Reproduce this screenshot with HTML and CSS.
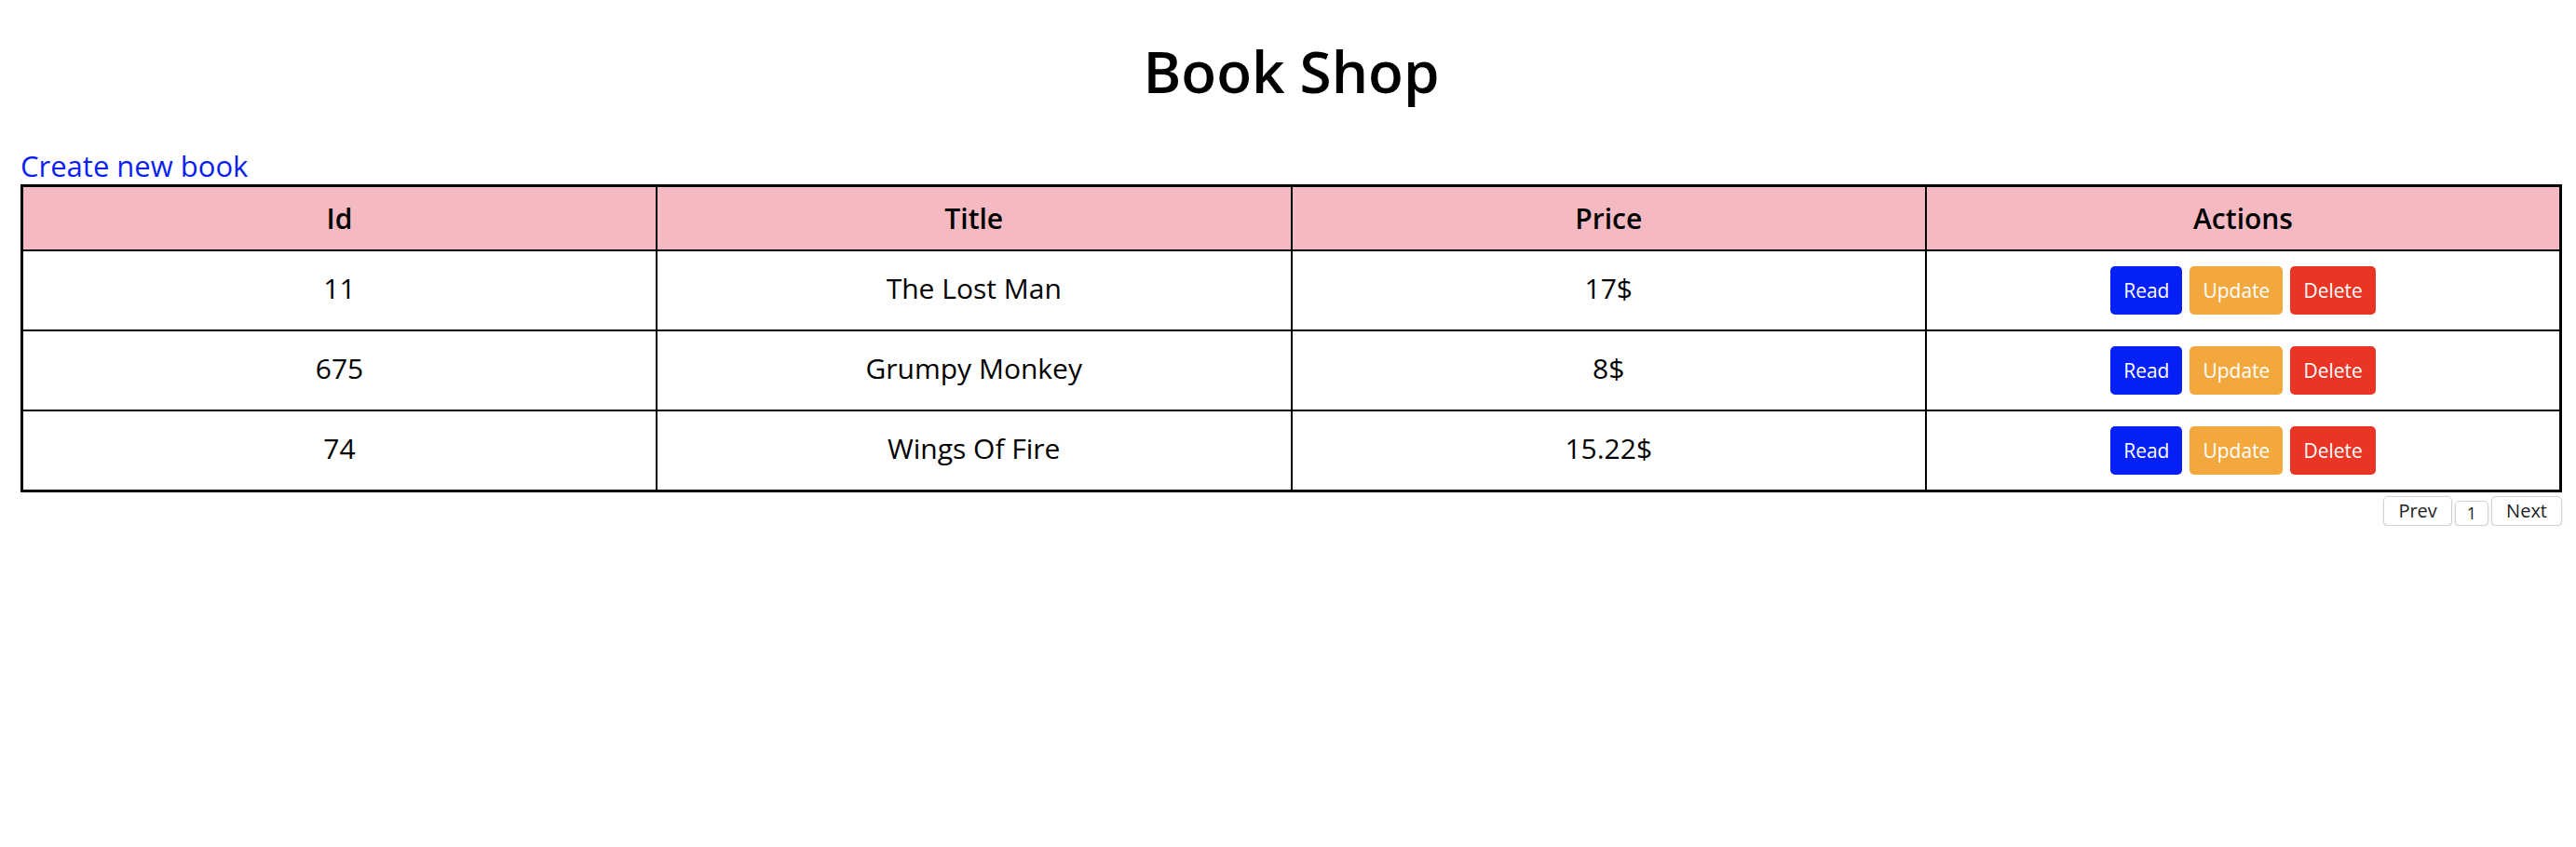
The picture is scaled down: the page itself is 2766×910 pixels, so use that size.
FILE: index.html
```html
<!DOCTYPE html>
<html lang="en">
<head>
<meta charset="utf-8">
<title>Book Shop</title>
<link rel="stylesheet" href="styles.css">
</head>
<body>
<div class="page">
  <h1 class="title">Book Shop</h1>
  <div class="create-row"><a class="create-link" href="#">Create new book</a></div>
  <table class="books">
    <thead>
      <tr><th>Id</th><th>Title</th><th>Price</th><th>Actions</th></tr>
    </thead>
    <tbody>
      <tr>
        <td>11</td><td>The Lost Man</td><td>17$</td>
        <td class="cell-actions"><div class="actions"><button class="btn btn-read">Read</button><button class="btn btn-update">Update</button><button class="btn btn-delete">Delete</button></div></td>
      </tr>
      <tr>
        <td>675</td><td>Grumpy Monkey</td><td>8$</td>
        <td class="cell-actions"><div class="actions"><button class="btn btn-read">Read</button><button class="btn btn-update">Update</button><button class="btn btn-delete">Delete</button></div></td>
      </tr>
      <tr>
        <td>74</td><td>Wings Of Fire</td><td>15.22$</td>
        <td class="cell-actions"><div class="actions"><button class="btn btn-read">Read</button><button class="btn btn-update">Update</button><button class="btn btn-delete">Delete</button></div></td>
      </tr>
    </tbody>
  </table>
  <div class="pagination">
    <button class="pg-btn">Prev</button>
    <button class="pg-btn pg-current">1</button>
    <button class="pg-btn">Next</button>
  </div>
</div>
</body>
</html>
```
FILE: styles.css
```css
html, body {
  margin: 0;
  padding: 0;
  background: #ffffff;
}

body {
  font-family: "Open Sans", "Noto Sans", sans-serif;
  color: #000000;
}

.page {
  padding: 0 15px 0 22px;
}

.title {
  margin: 0;
  padding-top: 44px;
  font-size: 62px;
  line-height: 64px;
  font-weight: 600;
  text-align: center;
}

.create-row {
  margin-top: 53px;
  line-height: 35px;
  font-size: 31px;
}

.create-link {
  color: #0a1ff0;
  text-decoration: none;
}

.books {
  margin-top: 2px;
  width: 100%;
  border-collapse: collapse;
  table-layout: fixed;
  border: 3px solid #000000;
}

.books th,
.books td {
  border: 2px solid #000000;
  text-align: center;
  vertical-align: middle;
  font-size: 30px;
  line-height: 35px;
}

.books th {
  background: #f4b9c1;
  font-weight: 600;
  padding: 16px 8px;
}

.books td {
  font-weight: 400;
  padding: 13px 8px 19px;
}

.books td.cell-actions {
  padding: 16px 8px;
}

.actions {
  display: flex;
  justify-content: center;
  gap: 8px;
}

.btn {
  display: block;
  height: 52px;
  padding: 0 14px;
  border: none;
  border-radius: 5px;
  font-family: "Open Sans", "Noto Sans", sans-serif;
  font-size: 21px;
  line-height: 52px;
  color: #ffffff;
  cursor: pointer;
}

.btn-read {
  background: #0420f5;
}

.btn-update {
  background: #f2a83c;
}

.btn-delete {
  background: #ea3424;
}

.pagination {
  display: flex;
  justify-content: flex-end;
  align-items: flex-end;
  gap: 3px;
  margin-top: 4px;
}

.pg-btn {
  font-family: "Open Sans", "Noto Sans", sans-serif;
  font-size: 20px;
  line-height: 30px;
  padding: 0 15px;
  background: #ffffff;
  color: #222222;
  border: 1px solid #d2d2d2;
  border-radius: 5px;
  box-shadow: 0 1px 2px rgba(0, 0, 0, 0.15);
}

.pg-current {
  font-size: 18px;
  line-height: 25px;
  padding: 0 12px;
}
```
